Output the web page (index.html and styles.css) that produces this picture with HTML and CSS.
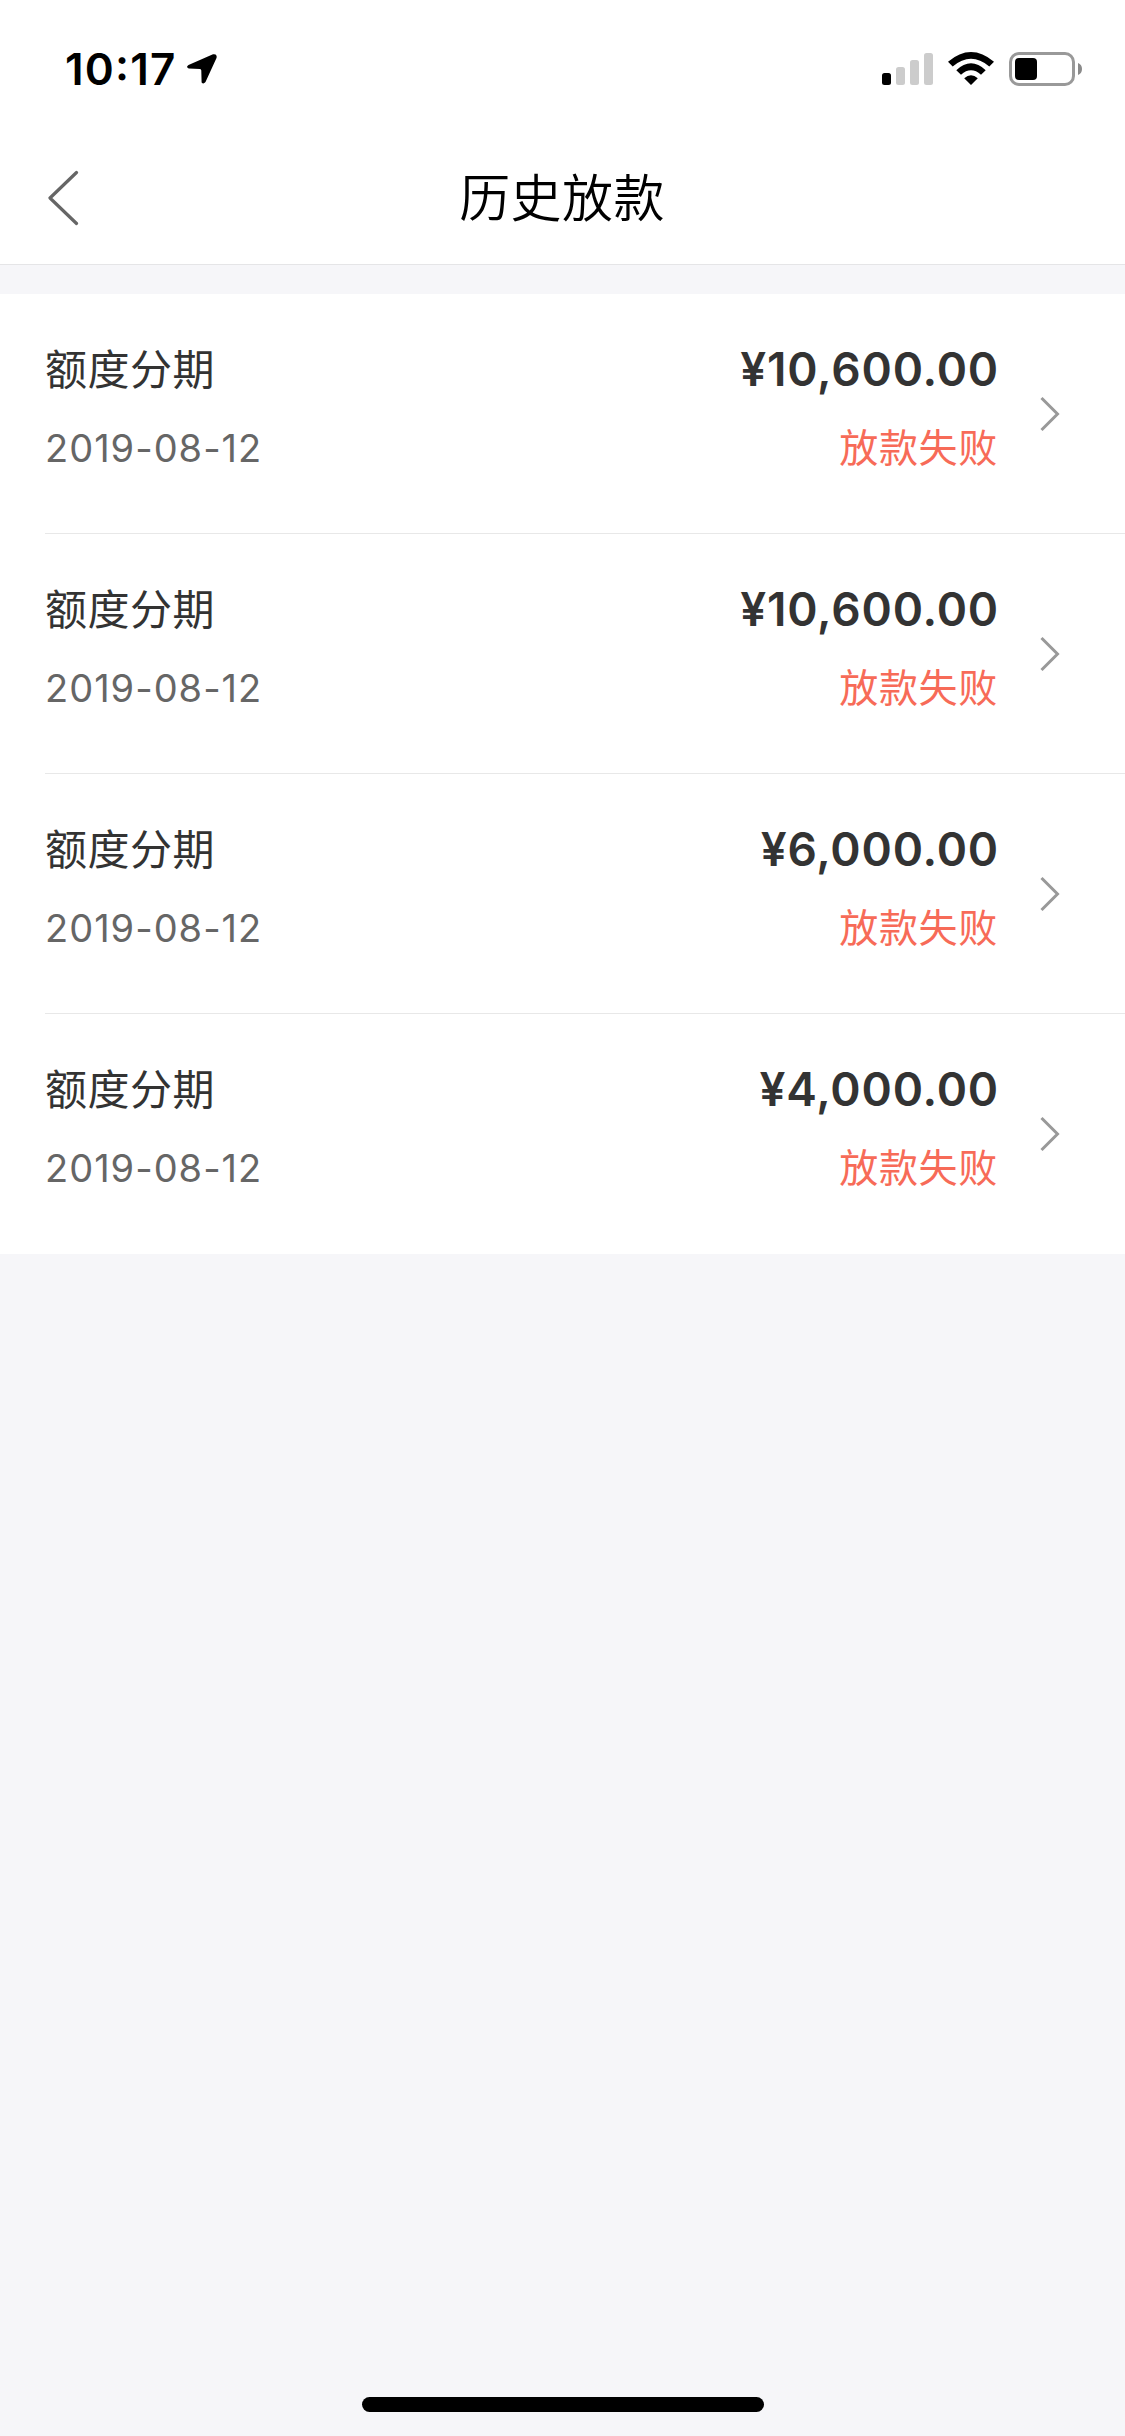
FILE: index.html
```html
<!DOCTYPE html>
<html lang="zh-CN">
<head>
<meta charset="utf-8">
<title>历史放款</title>
<link rel="stylesheet" href="styles.css">
</head>
<body>
<div class="screen">
  <div class="status-bar">
    <div class="status-left">
      <span class="time">10:17</span>
      <svg class="location" width="32" height="32" viewBox="0 0 32 32"><path d="M2.500 12 L27 1.300 Q31.500 .5 30.500 5 L19.500 29 Q17.500 31.500 15.600 29.500 L15.300 17.500 Q15.300 16 14 16 L2.800 15.600 Q-.5 14 2.500 12Z"/></svg>
    </div>
    <div class="status-right">
      <svg class="signal" width="51" height="33" viewBox="0 0 51 33"><rect y="20" width="9" height="12" rx="2.500"/><g fill="#ccc"><rect x="14" y="14" width="9" height="18" rx="2.500"/><rect x="28" y="7" width="9" height="25" rx="2.500"/><rect x="42" width="9" height="32" rx="2.500"/></g></svg>
      <svg class="wifi" width="46" height="33" viewBox="0 0 46 33"><path d="M0 9.700Q23-9.700 46 9.700L41.300 14.400Q23-1 4.700 14.400ZM8.300 18.200Q23 4.400 37.700 18.200L33 22.700Q23 13.800 13 22.700ZM16.200 26.200Q23 20.200 29.800 26.200L23 33Z"/></svg>
      <svg class="battery" width="74" height="34" viewBox="0 0 74 34"><rect x="1.500" y="1.500" width="63" height="31" rx="8.500" fill="none" stroke="#999" stroke-width="3"/><rect x="6" y="6" width="22" height="22" rx="4"/><path d="M69 11Q73 12.500 73 17T69 23Z" fill="#8a8a8a"/></svg>
    </div>
  </div>
  <header class="nav-bar">
    <svg class="back" width="32" height="56" viewBox="0 0 32 56"><path d="M28.500 2.500L2 28L28.500 53.500" fill="none" stroke="#666" stroke-width="3.200" stroke-linecap="round" stroke-linejoin="round"/></svg>
    <h1 class="title">历史放款</h1>
  </header>
  <main class="list">
    <div class="row">
      <div class="info"><div class="name">额度分期</div><div class="date">2019-08-12</div></div>
      <div class="result"><div class="amount">¥10,600.00</div><div class="state">放款失败</div></div>
      <svg class="chevron" width="20" height="36" viewBox="0 0 20 36"><path d="M1.500 2L17.500 18L1.500 34"/></svg>
    </div>
    <div class="row">
      <div class="info"><div class="name">额度分期</div><div class="date">2019-08-12</div></div>
      <div class="result"><div class="amount">¥10,600.00</div><div class="state">放款失败</div></div>
      <svg class="chevron" width="20" height="36" viewBox="0 0 20 36"><path d="M1.500 2L17.500 18L1.500 34"/></svg>
    </div>
    <div class="row">
      <div class="info"><div class="name">额度分期</div><div class="date">2019-08-12</div></div>
      <div class="result"><div class="amount">¥6,000.00</div><div class="state">放款失败</div></div>
      <svg class="chevron" width="20" height="36" viewBox="0 0 20 36"><path d="M1.500 2L17.500 18L1.500 34"/></svg>
    </div>
    <div class="row">
      <div class="info"><div class="name">额度分期</div><div class="date">2019-08-12</div></div>
      <div class="result"><div class="amount">¥4,000.00</div><div class="state">放款失败</div></div>
      <svg class="chevron" width="20" height="36" viewBox="0 0 20 36"><path d="M1.500 2L17.500 18L1.500 34"/></svg>
    </div>
  </main>
  <div class="home-indicator"></div>
</div>
</body>
</html>
```
FILE: styles.css
```css
* { box-sizing: border-box; }
body { margin: 0; font-family: Inter, "Noto Sans CJK SC", sans-serif; }
svg { display: block; flex: none; }
.screen { display: flex; flex-direction: column; width: 1125px; height: 2436px; background: #f6f6f9; }
.status-bar { display: flex; justify-content: space-between; height: 132px; padding: 0 42px 0 65px; background: #fff; }
.status-left, .status-right { display: flex; align-items: flex-start; }
.time { margin-top: 39px; font-size: 44px; line-height: 60px; font-weight: 600; letter-spacing: 1.2px; font-feature-settings: "case" 1; }
.location { margin: 53px 0 0 9px; }
.signal { margin-top: 53px; }
.wifi { margin: 52px 15px 0; }
.battery { margin-top: 52px; }
.nav-bar { display: grid; grid-template-columns: 200px 1fr 200px; align-items: center; height: 133px; background: #fff; border-bottom: 1px solid #e5e5e7; }
.back { margin: 0 0 0 48px; }
.title { margin: 2px 1px 0 0; font-size: 51px; line-height: 72px; font-weight: 350; letter-spacing: .4px; text-align: center; }
.list { margin-top: 29px; padding-left: 45px; background: #fff; }
.row { display: flex; height: 240px; padding-top: 42px; border-bottom: 1px solid #e8e8e8; }
.row:last-child { border-bottom: 0; }
.info { flex: 1; padding-top: 1px; }
.name { font-size: 42px; line-height: 66px; letter-spacing: .5px; color: #333; }
.date { margin-top: 12px; font-size: 38px; line-height: 66px; letter-spacing: 1px; color: #666; }
.result { text-align: right; }
.amount { font-size: 46px; line-height: 66px; font-weight: 600; letter-spacing: .8px; color: #333; }
.state { margin-top: 13px; padding-right: 1px; font-size: 39px; line-height: 66px; letter-spacing: .7px; color: #f76b58; }
.chevron { margin: 60px 65px 0 41px; fill: none; stroke: #999; stroke-width: 3; }
.home-indicator { width: 402px; height: 15px; margin: auto auto 24px 362px; border-radius: 7.500px; background: #000; }
```
